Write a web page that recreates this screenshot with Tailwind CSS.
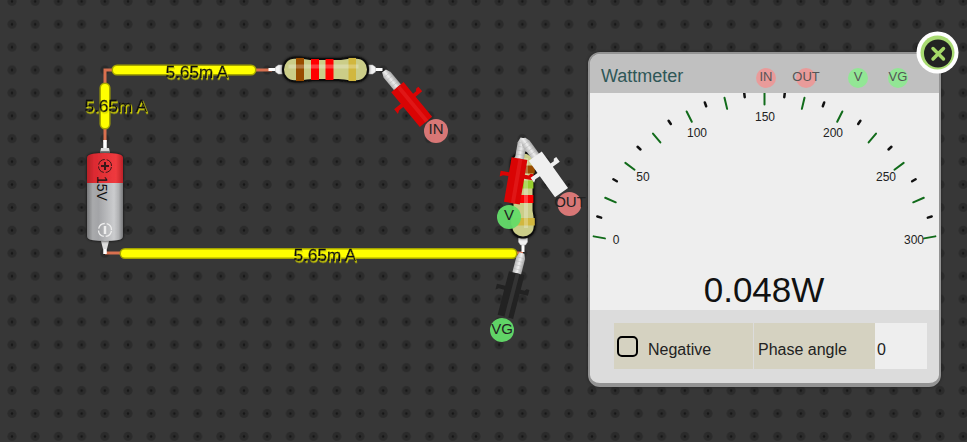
<!DOCTYPE html>
<html lang="en">
<head>
<meta charset="utf-8">
<meta name="viewport" content="width=device-width, initial-scale=1">
<title>Circuit simulator - Wattmeter</title>
<script src="https://cdn.jsdelivr.net/npm/@tailwindcss/browser@4"></script>
</head>
<body class="bg-[#373737] font-['Liberation_Sans',Arial,sans-serif]">
<main class="relative min-h-screen overflow-hidden">

  <!-- Breadboard canvas -->
  <svg class="absolute inset-0 h-full w-full" role="img" aria-label="Circuit">
    <defs>
      <pattern id="holes" x="0.4" y="-10.1" width="23.2" height="22.9" patternUnits="userSpaceOnUse">
        <circle cx="11.6" cy="11.4" r="4.6" fill="#2b2b2b"/>
        <circle cx="11.6" cy="11.4" r="1.2" fill="#161616"/>
      </pattern>
      <linearGradient id="cell" x1="0" x2="1">
        <stop offset="0" stop-color="#77787a"/><stop offset=".16" stop-color="#a9aaac"/>
        <stop offset=".32" stop-color="#a3a4a7"/><stop offset=".75" stop-color="#cbccce"/>
        <stop offset=".88" stop-color="#b0b1b3"/><stop offset="1" stop-color="#77787a"/>
      </linearGradient>
      <linearGradient id="cellred" x1="0" x2="1">
        <stop offset="0" stop-color="#b52027"/><stop offset=".2" stop-color="#dc2a31"/>
        <stop offset=".8" stop-color="#ef3a3e"/><stop offset="1" stop-color="#bd2228"/>
      </linearGradient>
      <linearGradient id="metal" x1="0" x2="0" y1="0" y2="1">
        <stop offset="0" stop-color="#a5a5a5"/><stop offset=".5" stop-color="#eee"/><stop offset="1" stop-color="#b5b5b5"/>
      </linearGradient>
      <filter id="glow" x="-20%" y="-40%" width="140%" height="180%">
        <feDropShadow dx="0" dy="0" stdDeviation="1.5" flood-color="#000" flood-opacity=".9"/>
      </filter>
      <filter id="lift" x="-20%" y="-40%" width="140%" height="200%">
        <feDropShadow dx="1" dy="1.5" stdDeviation="0" flood-color="#d9d900"/>
      </filter>
      <clipPath id="shell">
        <path id="shellshape" d="M-31-11.8H-25C-19-11.8-18-10.400-13-10.400H13C18-10.400 19-11.8 25-11.8H31C38-11.8 42.5-6 42.5 0S38 11.8 31 11.8H25C19 11.8 18 10.400 13 10.400H-13C-18 10.400-19 11.8-25 11.8H-31C-38 11.8-42.5 6-42.5 0S-38-11.8-31-11.8Z"/>
      </clipPath>
      <g id="leads">
        <path d="M-57 0H-49M49 0H57" stroke="#fff" stroke-width="3"/>
        <path d="M-50-2.5L-47-4.5H-43V4.5H-47L-50 2.5ZM50-2.5L47-4.5H43V4.5H47L50 2.5Z" fill="#f2f2f2" stroke="#bbb" stroke-width=".5"/>
      </g>
      <g id="tip"><path d="M0-2.5L5-4.500H22V4.500H5L0 2.5Z" fill="url(#metal)"/><path d="M5-4V4M9-4V4M13-4V4M17-4V4" stroke="#aaa" stroke-width=".6" opacity=".6"/></g>
      <path id="grip" d="M21-8H36V-12L34-13.500V-16.500H40V-8H66V8H40V13.500L42 16.500H36V8H21Z"/>
    </defs>

    <rect width="100%" height="100%" fill="url(#holes)"/>

    <!-- wires -->
    <g fill="none" stroke="#d9704f" stroke-width="3">
      <path d="M105 142V70H272M105 253H523"/>
    </g>
    <g fill="none" stroke-linecap="round">
      <path d="M117 70H251M105 88V124M125 253.500H512" stroke="#a5a500" stroke-width="11"/>
      <path d="M117 70H251M105 88V124M125 253.500H512" stroke="#ff0" stroke-width="8"/>
    </g>

    <!-- battery -->
    <g>
      <path d="M105 140V149M105 245V254" stroke="#fff" stroke-width="3.500"/>
      <path d="M101 148H109L110 153H100ZM101 241H109L107 249H103Z" fill="#ddd"/>
      <path d="M100 152H110" stroke="#888" stroke-width="2"/>
      <g filter="url(#glow)">
        <path d="M87 181V158Q87 155 92 154Q105 152 118 154Q123 155 123 158V181Z" fill="url(#cellred)"/>
        <path d="M87 182.500H123V236Q123 239 118 240Q105 242 92 240Q87 239 87 236Z" fill="url(#cell)"/>
      </g>
      <rect x="87" y="180" width="36" height="3" fill="url(#cellred)"/>
      <g fill="none" stroke="#3c1719" stroke-width="1">
        <circle cx="105" cy="166" r="6.500" stroke-dasharray="8.200 2" stroke-dashoffset="-1"/>
        <path d="M101 166H109M105 162V170" stroke-width="2"/>
      </g>
      <g fill="none" stroke="#eee" stroke-width="1.300">
        <circle cx="105" cy="230" r="6.500" stroke-dasharray="8.200 2" stroke-dashoffset="-1"/>
        <path d="M105 226V234" stroke-width="2.500"/>
      </g>
      <text transform="translate(97 176) rotate(90)" font-size="14" fill="#111">15V</text>
    </g>

    <g transform="translate(325.500 69.500)">
      <use href="#leads"/>
      <g filter="url(#glow)"><use href="#shellshape" fill="#cbcd88" stroke="#111" stroke-width="2"/></g>
      <g clip-path="url(#shell)">
        <path d="M-29.500-12h8v24h-8z" fill="#994d00"/>
        <path d="M-14.500-12h8v24h-8zM0-12h8v24h-8z" fill="#f00"/>
        <path d="M23-12h7.500v24h-7.500z" fill="#d1b73e"/>
        <path d="M-37-5h70v4h-70z" fill="#fff" opacity=".25"/>
      </g>
    </g>

    <!-- load resistor -->
    <g transform="translate(523 195) rotate(90)">
      <use href="#leads"/>
      <g filter="url(#glow)"><use href="#shellshape" fill="#cbcd88" stroke="#111" stroke-width="2"/></g>
      <g clip-path="url(#shell)">
        <path d="M-29.500-12h8v24h-8z" fill="#994d00"/>
        <path d="M-14.500-12h8v24h-8z" fill="#96cd2f"/>
        <path d="M0-12h8v24h-8z" fill="#f00"/>
        <path d="M23-12h7.500v24h-7.500z" fill="#d1b73e"/>
        <path d="M-37-5h70v4h-70z" fill="#fff" opacity=".25"/>
      </g>
    </g>

    <!-- probes -->
    <g transform="translate(384 71) rotate(50.500)">
      <use href="#tip"/><use href="#grip" fill="#d90404"/><path d="M21-1H66" stroke="#e01616" stroke-width="4"/>
    </g>
    <g transform="translate(523 138) rotate(99.700)">
      <use href="#tip"/><use href="#grip" fill="#d90404"/><path d="M21-1H66" stroke="#e01616" stroke-width="4"/>
    </g>
    <g transform="translate(523 139) rotate(54.300)">
      <use href="#tip"/><use href="#grip" fill="#efefef"/>
    </g>
    <g transform="translate(522 253) rotate(104.600)">
      <use href="#tip"/><use href="#grip" fill="#222"/><path d="M21-1H66" stroke="#343434" stroke-width="4"/>
    </g>
    <g fill="#e47c7b" fill-opacity=".93">
      <circle cx="436" cy="131" r="12"/><circle cx="569.500" cy="204" r="12"/>
    </g>
    <g fill="#63dc69" fill-opacity=".95">
      <circle cx="509" cy="217" r="12"/><circle cx="502" cy="330" r="12"/>
    </g>
    <g font-size="15" fill="#222" text-anchor="middle">
      <text x="436" y="134">IN</text>
      <text x="570" y="207">OUT</text>
      <text x="509" y="220">V</text>
      <text x="502" y="334">VG</text>
    </g>

    <!-- current readings -->
    <g font-size="17" fill="#111" stroke="#111" stroke-width=".4" text-anchor="middle">
      <text x="197" y="78" filter="url(#lift)">5.65m A</text>
      <text x="116" y="112" filter="url(#lift)">5.65m A</text>
      <text x="325" y="261" filter="url(#lift)">5.65m A</text>
    </g>
  </svg>

  <!-- Wattmeter window -->
  <section class="absolute top-[52px] right-[26px] w-[353px] rounded-xl border-2 border-b-4 border-[#939393] bg-[#dcdcdc] shadow-[0_0_3px_#222]" aria-labelledby="title">
    <header class="flex h-[39px] items-center justify-between rounded-t-[10px] bg-[#c0c0c0] pt-2 pr-[31px] pl-[11px]">
      <h1 id="title" class="pb-1 text-lg leading-6 text-[#2f5757]">Wattmeter</h1>
      <ul class="flex items-center text-[13px] leading-5 text-[#555]">
        <li class="mr-5 flex size-5 justify-center rounded-full bg-[#e99b9a]"><span class="-mt-px">IN</span></li>
        <li class="mr-8 flex size-5 justify-center rounded-full bg-[#e99b9a]"><span class="-mt-px">OUT</span></li>
        <li class="mr-5 flex size-5 justify-center rounded-full bg-[#92e695]"><span class="-mt-px">V</span></li>
        <li class="flex size-5 justify-center rounded-full bg-[#92e695]"><span class="-mt-px">VG</span></li>
      </ul>
    </header>

    <div class="h-[217px] bg-[#eee]">
      <svg id="dial" class="block h-full w-full" viewBox="0 0 349 217" role="img" aria-label="Power reading 0.048 watts">
        <g id="ticks" stroke-linecap="round" stroke-width="2"></g>
        <g font-size="12" fill="#222" text-anchor="middle">
          <text x="26" y="151">0</text>
          <text x="53" y="88">50</text>
          <text x="107" y="44">100</text>
          <text x="175" y="28">150</text>
          <text x="243" y="44">200</text>
          <text x="296" y="88">250</text>
          <text x="324" y="151">300</text>
        </g>
        <text x="174" y="209" font-size="35" fill="#111" text-anchor="middle">0.048W</text>
      </svg>
    </div>

    <form class="flex h-[73px] px-3 pt-[13px] pb-[14px] pl-6 text-base text-[#222]">
      <div class="flex w-[139px] items-center gap-2.5 bg-[#d5d2c1] pl-[3px]">
        <input id="negative" type="checkbox" class="size-[21px] appearance-none rounded-[5px] border-2 border-black">
        <label for="negative" class="pt-2">Negative</label>
      </div>
      <label for="phase" class="ml-px flex flex-1 items-center bg-[#d5d2c1] pt-2 pl-1">Phase angle</label>
      <input id="phase" type="text" value="0" class="w-[52px] bg-[#eee] pt-2 pl-0.5 outline-none">
    </form>

    <button type="button" aria-label="Close" class="absolute -top-[23px] -right-[20px] size-[43px]">
      <svg class="block size-full" viewBox="0 0 43 43">
        <circle cx="21.500" cy="21.500" r="21" fill="#fff"/>
        <circle cx="21.500" cy="21.500" r="17" fill="#a9db72"/>
        <circle cx="22" cy="22.500" r="14" fill="#222"/>
        <path d="M17 17.500L27.500 28M27.500 17.500L17 28" stroke="#a5d867" stroke-width="3.500" stroke-linecap="round"/>
      </svg>
    </button>
  </section>
</main>
<script>
  // Dial scale: 13 major marks with a minor mark between each pair, over a 160 degree arc.
  const ticks = document.getElementById('ticks');
  for (let i = 0; i <= 24; i++) {
    const major = i % 2 === 0;
    const a = (170 - i * 160 / 24) * Math.PI / 180;
    const outer = major ? 173.5 : 174.5, inner = major ? 162 : 170.5;
    const line = document.createElementNS('http://www.w3.org/2000/svg', 'line');
    line.setAttribute('x1', 174.5 + outer * Math.cos(a));
    line.setAttribute('y1', 173.5 - outer * Math.sin(a));
    line.setAttribute('x2', 174.5 + inner * Math.cos(a));
    line.setAttribute('y2', 173.5 - inner * Math.sin(a));
    line.setAttribute('stroke', major ? '#116b1a' : '#111');
    if (!major) line.setAttribute('stroke-width', '2.5');
    ticks.appendChild(line);
  }
</script>
</body>
</html>
